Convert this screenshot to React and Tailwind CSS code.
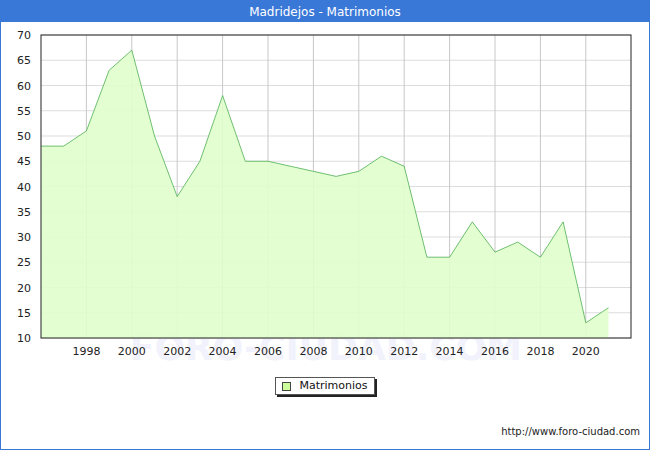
const data = [48, 48, 51, 63, 67, 50, 38, 45, 58, 45, 45, 44, 43, 42, 43, 46, 44, 26, 26, 33, 27, 29, 26, 33, 13, 16]

const X0 = 40, XS = 22.7, TOP = 13, BOT = 316
const xOf = (i) => X0 + i * XS
const yOf = (v) => BOT - ((v - 10) / 60) * (BOT - TOP)

export default function App() {
  const pts = data.map((v, i) => `${xOf(i)},${yOf(v)}`).join(' ')
  const area = `${xOf(0)},${BOT} ${pts} ${xOf(data.length - 1)},${BOT}`
  const ticks = [10, 15, 20, 25, 30, 35, 40, 45, 50, 55, 60, 65, 70]
  const years = [1998, 2000, 2002, 2004, 2006, 2008, 2010, 2012, 2014, 2016, 2018, 2020]

  return (
    <div className="w-[650px] h-[450px] border border-[#3a78d8] bg-white flex flex-col" style={{ fontFamily: 'Verdana, "DejaVu Sans", sans-serif' }}>
      <div className="h-[21px] bg-[#3a78d8] text-white text-[12px] flex items-center justify-center">Madridejos - Matrimonios</div>
      <svg width="648" height="340" className="block">
        <text x="325" y="338" textAnchor="middle" fontSize="36" fill="#f1f2fb" fontWeight="bold">FORO-CIUDAD.COM</text>
        {ticks.map((t) => (
          <g key={t}>
            <line x1={X0} x2="630" y1={yOf(t)} y2={yOf(t)} stroke="#dddddd" />
            <text x="30" y={yOf(t) + 4} textAnchor="end" fontSize="11" fill="#222">{t}</text>
          </g>
        ))}
        {years.map((y) => (
          <g key={y}>
            <line x1={xOf(y - 1996)} x2={xOf(y - 1996)} y1={TOP} y2={BOT} stroke="#c8c8c8" />
            <text x={xOf(y - 1996)} y="333" textAnchor="middle" fontSize="11" fill="#222">{y}</text>
          </g>
        ))}
        <polygon points={area} fill="#e0ffcc" fillOpacity="0.9" />
        <polyline points={pts} fill="none" stroke="#4caf50" strokeWidth="0.8" />
        <rect x={X0} y={TOP} width={630 - X0} height={BOT - TOP} fill="none" stroke="#222" />
      </svg>
      <div className="flex justify-center mt-[15px]">
        <div className="flex items-center gap-[8px] border border-[#555] shadow-[2px_2px_0_#222] px-[6px] h-[18px] text-[11px] text-[#111]">
          <span className="w-[9px] h-[9px] border border-[#444] bg-[#ccff99]" />
          Matrimonios
        </div>
      </div>
      <div className="mt-auto mb-[10px] mr-[9px] text-right text-[10px] text-[#222]">http://www.foro-ciudad.com</div>
    </div>
  )
}
